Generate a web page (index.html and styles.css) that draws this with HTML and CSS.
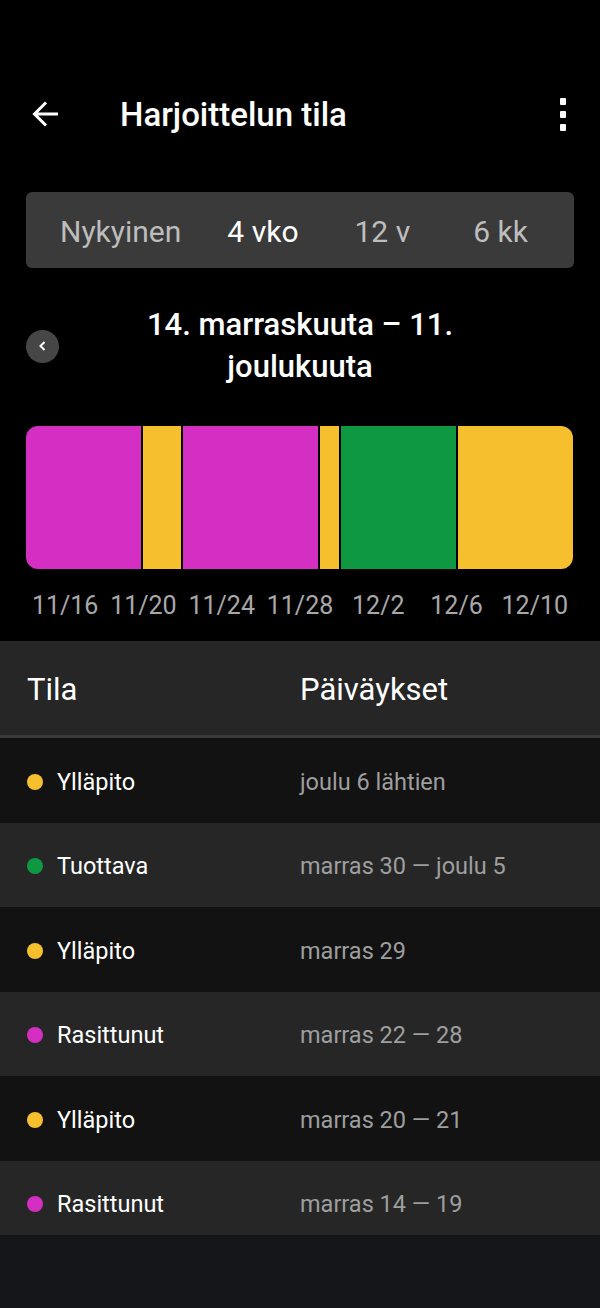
FILE: index.html
```html
<!DOCTYPE html>
<html lang="fi">
<head>
    <meta charset="UTF-8">
    <meta name="viewport" content="width=device-width, initial-scale=1.0">
    <title>Harjoittelun tila</title>
    <link rel="stylesheet" href="styles.css">
</head>
<body>
    <div class="top">
        <header class="app-bar">
            <svg class="back-icon" width="28" height="28" viewBox="0 0 28 28">
                <path d="M26 14H3M14 2.5L2.5 14L14 25.5" fill="none" stroke="#fff" stroke-width="3"/>
            </svg>
            <h1 class="title">Harjoittelun tila</h1>
            <div class="kebab"><span></span><span></span><span></span></div>
        </header>

        <nav class="range-tabs">
            <span class="tab tab-now">Nykyinen</span>
            <span class="tab tab-4w active">4 vko</span>
            <span class="tab tab-12w">12 v</span>
            <span class="tab tab-6m">6 kk</span>
        </nav>

        <div class="period">
            <button class="prev">
                <svg width="12" height="12" viewBox="0 0 12 12">
                    <path d="M7.5 2L3.5 6L7.5 10" fill="none" stroke="#fff" stroke-width="2"/>
                </svg>
            </button>
            <h2 class="period-text">14. marraskuuta – 11. joulukuuta</h2>
            <span></span>
        </div>

        <div class="status-bar">
            <div class="seg strained" style="flex-grow: 6"></div>
            <div class="seg maintain" style="flex-grow: 2"></div>
            <div class="seg strained" style="flex-grow: 7"></div>
            <div class="seg maintain" style="flex-grow: 1"></div>
            <div class="seg productive" style="flex-grow: 6"></div>
            <div class="seg maintain" style="flex-grow: 6"></div>
        </div>

        <div class="axis">
            <span>11/16</span>
            <span>11/20</span>
            <span>11/24</span>
            <span>11/28</span>
            <span>12/2</span>
            <span>12/6</span>
            <span>12/10</span>
        </div>
    </div>

    <div class="table">
        <div class="table-head">
            <span>Tila</span>
            <span>Päiväykset</span>
        </div>
        <div class="row">
            <span class="state"><i class="dot maintain"></i>Ylläpito</span>
            <span class="dates">joulu 6 lähtien</span>
        </div>
        <div class="row">
            <span class="state"><i class="dot productive"></i>Tuottava</span>
            <span class="dates">marras 30 — joulu 5</span>
        </div>
        <div class="row">
            <span class="state"><i class="dot maintain"></i>Ylläpito</span>
            <span class="dates">marras 29</span>
        </div>
        <div class="row">
            <span class="state"><i class="dot strained"></i>Rasittunut</span>
            <span class="dates">marras 22 — 28</span>
        </div>
        <div class="row">
            <span class="state"><i class="dot maintain"></i>Ylläpito</span>
            <span class="dates">marras 20 — 21</span>
        </div>
        <div class="row">
            <span class="state"><i class="dot strained"></i>Rasittunut</span>
            <span class="dates">marras 14 — 19</span>
        </div>
    </div>
</body>
</html>
```

FILE: styles.css
```css
body { margin: 0; background: #151619; font-family: Roboto, "Liberation Sans", sans-serif; color: #fff; }
.top { background: #000; padding-bottom: 21px; }

.app-bar { display: flex; align-items: center; height: 56px; padding: 86px 26px 0 32px; }
.back-icon { display: block; }
.title { margin: 0 0 0 60px; font-size: 33px; font-weight: 500; }
.kebab { margin-left: auto; margin-right: 8px; display: flex; flex-direction: column; gap: 6px; }
.kebab span { width: 6px; height: 7px; background: #fff; border-radius: 1px; }

.range-tabs { display: flex; align-items: center; height: 76px; margin: 50px 26px 0; padding: 2px 0 0 34px; box-sizing: border-box; background: #3a3a3a; border-radius: 6px; }
.tab { font-size: 30px; color: #bdbdbd; }
.tab.active { color: #fff; }
.tab-4w { margin-left: 46px; }
.tab-12w { margin-left: 56px; }
.tab-6m { margin-left: 63px; }

.period { display: grid; grid-template-columns: 33px 1fr 33px; align-items: center; margin-top: 36px; padding: 0 26px; }
.prev { width: 33px; height: 33px; padding: 0; border: none; border-radius: 50%; background: #464646; display: flex; align-items: center; justify-content: center; }
.period-text { margin: 0; padding: 0 30px; font-size: 31px; font-weight: 500; line-height: 42px; text-align: center; }

.status-bar { display: flex; gap: 2px; height: 143px; margin: 38px 27px 0 26px; border-radius: 12px; overflow: hidden; }
.seg { flex-basis: 0; }
.strained { background: #d42fc2; }
.maintain { background: #f5bf2d; }
.productive { background: #0e9841; }

.axis { display: flex; margin: 23px 26px 0; }
.axis span { flex: 1; text-align: center; font-size: 25px; line-height: 28px; color: #a8a8a8; }

.table-head, .row { display: grid; grid-template-columns: 273px 1fr; align-items: center; padding-left: 27px; box-sizing: border-box; }
.table-head { height: 97px; padding-top: 3px; background: #262626; border-bottom: 3px solid #3b3b3b; font-size: 31px; }
.row { height: 84.5px; padding-top: 3px; font-size: 23.5px; }
.row:nth-child(odd) { background: #262626; }
.row:nth-child(even) { background: #121212; }
.row:last-child { height: 74px; padding-top: 12px; }
.state { display: flex; align-items: center; }
.dot { width: 16px; height: 16px; border-radius: 50%; margin-right: 14px; }
.dates { color: #9e9e9e; }
```
